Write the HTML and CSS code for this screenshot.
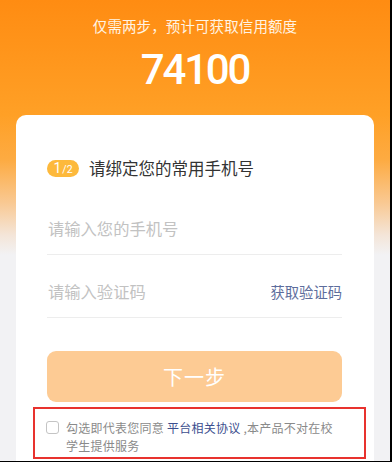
FILE: index.html
```html
<!DOCTYPE html>
<html lang="zh-CN">
<head>
<meta charset="utf-8">
<title>绑定手机号</title>
<link rel="stylesheet" href="styles.css">
</head>
<body>
<div class="page">
  <header class="hero">
    <p class="hero-sub">仅需两步，预计可获取信用额度</p>
    <p class="hero-amount">74100</p>
  </header>
  <section class="card">
    <div class="step-row">
      <span class="step-badge"><span class="step-cur">1</span><span class="step-tot">/2</span></span>
      <span class="step-title">请绑定您的常用手机号</span>
    </div>
    <div class="field">
      <span class="placeholder">请输入您的手机号</span>
    </div>
    <div class="field">
      <span class="placeholder">请输入验证码</span>
      <span class="code-link">获取验证码</span>
    </div>
    <button class="next-btn" type="button">下一步</button>
    <div class="agree">
      <span class="checkbox"></span>
      <p class="agree-text"><span>勾选即代表您同意 </span><span class="agree-link">平台相关协议</span><span> ,本产品不对在校</span><br><span>学生提供服务</span></p>
    </div>
  </section>
</div>
</body>
</html>
```

FILE: styles.css
```css
html {
  margin: 0;
  padding: 0;
  background: #000;
}
body {
  margin: 0;
  padding: 0;
  width: 390px;
  height: 461px;
  overflow: hidden;
  font-family: "Noto Sans CJK SC", "Noto Sans", sans-serif;
}
.page {
  height: 461px;
  display: flex;
  flex-direction: column;
  background: linear-gradient(180deg, #ff8c12 0px, #ffa026 115px, #fdab42 160px, #f9c993 203px, #f4e5d8 235px, #f2f2f4 255px, #f2f2f4 100%);
}
.hero {
  display: flex;
  flex-direction: column;
  align-items: center;
  padding-top: 16px;
}
.hero-sub {
  margin: 0;
  font-size: 14.5px;
  line-height: 20px;
  color: #fff4e4;
  letter-spacing: 0.1px;
}
.hero-amount {
  margin: 10px 0 0;
  font-family: Roboto, "Liberation Sans", sans-serif;
  font-weight: 500;
  font-size: 42px;
  line-height: 48px;
  letter-spacing: -2.2px;
  color: #fff;
}
.card {
  flex: 1;
  margin: 21px 16px 0;
  background: #fff;
  border-radius: 10px 10px 0 0;
  padding: 43px 32px 0 31px;
  display: flex;
  flex-direction: column;
}
.step-row {
  display: flex;
  align-items: center;
  height: 20px;
}
.step-badge {
  width: 32px;
  height: 17px;
  border-radius: 9px;
  background: #fdb93c;
  color: #fff;
  display: flex;
  align-items: baseline;
  justify-content: center;
  font-family: Roboto, "Liberation Sans", sans-serif;
  margin-right: 10px;
}
.step-cur {
  font-size: 14px;
  line-height: 17px;
}
.step-tot {
  font-size: 10.5px;
  line-height: 17px;
  margin-left: 1px;
}
.step-title {
  font-size: 16.5px;
  line-height: 20px;
  color: #333;
}
.field {
  padding-top: 10px;
  height: 52px;
  border-bottom: 1px solid #ededed;
  display: flex;
  align-items: center;
  justify-content: space-between;
}
.step-row + .field {
  margin-top: 14px;
}
.placeholder {
  font-size: 16.3px;
  color: #c2c2c2;
  margin-left: 1px;
}
.code-link {
  font-size: 14.3px;
  color: #5d6d9c;
}
.next-btn {
  margin-top: 33px;
  height: 51px;
  border: none;
  border-radius: 9px;
  background: #fdcb94;
  color: #fff;
  font-family: "Noto Sans CJK SC", sans-serif;
  font-size: 20px;
  letter-spacing: 1px;
  padding: 0;
}
.agree {
  margin: 5px -24px 0 -14px;
  border: 2px solid #e8322e;
  padding: 10px 20px 2px 11px;
  display: flex;
  align-items: flex-start;
  gap: 7px;
}
.checkbox {
  flex: none;
  width: 11px;
  height: 11px;
  border: 1px solid #c4c4c4;
  border-radius: 3px;
  margin-top: 2px;
}
.agree-text {
  margin: 0;
  font-size: 12px;
  line-height: 18px;
  letter-spacing: 0.25px;
  color: #8a8a8a;
  white-space: nowrap;
}
.agree-link {
  color: #3c4e8e;
}
```
